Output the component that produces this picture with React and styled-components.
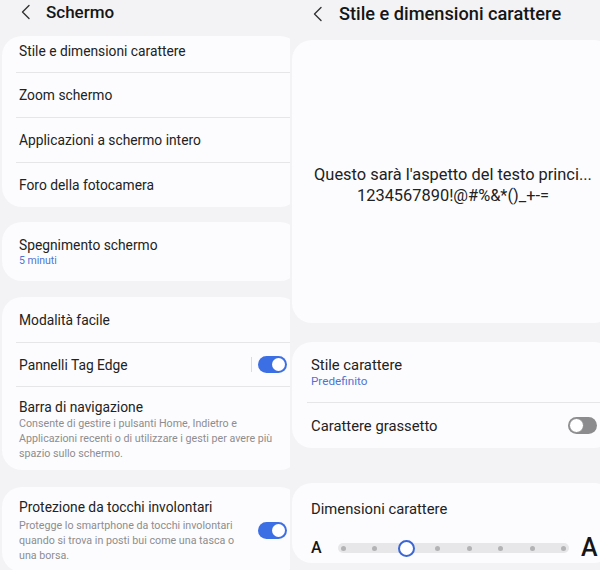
import React from 'react';
import styled, {createGlobalStyle} from 'styled-components';

const GlobalStyle = createGlobalStyle`
body{
margin:0;
background:#f3f3f5;
font-family:Roboto, "Noto Sans", sans-serif;
color:#1f1f1f;
}
`;

const Page = styled.div`
width:600px;
height:570px;
display:flex;
flex-direction:row;
overflow:hidden;
background:#f3f3f5;
`;

const Panel = styled.div`
width:${p => p.width}px;
flex-shrink:0;
height:100%;
overflow:hidden;
display:flex;
flex-direction:column;
`;

const Header = styled.div`
height:${p => p.height}px;
flex-shrink:0;
display:flex;
align-items:flex-start;
padding-left:${p => p.indent}px;
padding-top:${p => p.top}px;
box-sizing:border-box;
gap:${p => p.gap}px;
`;

const HeaderTitle = styled.div`
font-size:${p => p.size}px;
font-weight:500;
line-height:20px;
color:#161616;
`;

const Back = styled.svg`
width:10px;
height:16px;
margin-top:2px;
flex-shrink:0;
`;

const Card = styled.div`
width:${p => p.width}px;
margin-left:2px;
margin-top:${p => p.gap || 0}px;
flex-shrink:0;
background:#fcfcfe;
border-radius:20px;
box-sizing:border-box;
display:flex;
flex-direction:column;
`;

const Row = styled.div`
height:${p => p.height ? p.height + 'px' : 'auto'};
display:flex;
flex-direction:row;
align-items:center;
justify-content:space-between;
padding:${p => p.pad || '0'};
padding-left:${p => p.left}px;
padding-right:${p => p.right}px;
box-sizing:border-box;
`;

const Texts = styled.div`
display:flex;
flex-direction:column;
`;

const Title = styled.div`
font-size:${p => p.big ? 14.8 : 13.8}px;
line-height:18px;
color:#222;
`;

const Sub = styled.div`
font-size:${p => p.big ? 11.7 : 10.5}px;
line-height:14px;
color:#4f74d2;
`;

const Desc = styled.div`
font-size:10.7px;
line-height:15px;
color:#8d8d8f;
margin-top:${p => p.top || 0}px;
white-space:nowrap;
`;

const DescLine = styled.span`
display:block;
`;

const Divider = styled.div`
height:1px;
background:#e6e6e8;
margin-left:${p => p.inset}px;
flex-shrink:0;
`;

const Controls = styled.div`
display:flex;
align-items:center;
gap:6px;
`;

const VLine = styled.div`
width:1px;
height:15px;
background:#dcdcde;
`;

const Switch = styled.div`
width:29px;
height:17px;
border-radius:9px;
box-sizing:border-box;
background:${p => p.on ? '#3d6fe4' : '#8c8c8e'};
display:flex;
align-items:center;
justify-content:${p => p.on ? 'flex-end' : 'flex-start'};
padding:0 2px;
flex-shrink:0;
`;

const Knob = styled.div`
width:${p => p.on ? 13 : 15}px;
height:${p => p.on ? 13 : 15}px;
border-radius:50%;
background:#fff;
box-sizing:border-box;
margin-left:${p => p.on ? 0 : -1}px;
border:${p => p.on ? 'none' : '1px solid #8c8c8e'};
`;

const Preview = styled.div`
height:283px;
display:flex;
flex-direction:column;
align-items:center;
justify-content:center;
padding-top:6px;
box-sizing:border-box;
text-align:center;
`;

const PreviewLine = styled.div`
font-size:16.4px;
line-height:21px;
color:#222;
white-space:nowrap;
`;

const SizeRow = styled.div`
display:flex;
align-items:center;
height:30px;
margin-top:15px;
padding-left:19px;
`;

const Letter = styled.div`
font-size:${p => p.size}px;
font-weight:500;
color:#151515;
width:${p => p.w}px;
line-height:30px;
margin-left:${p => p.ml || 0}px;
`;

const Track = styled.div`
width:231px;
height:10px;
border-radius:5px;
background:#e7e7ea;
display:flex;
align-items:center;
justify-content:space-between;
padding:0 5.5px;
box-sizing:border-box;
`;

const Slot = styled.div`
width:0;
display:flex;
justify-content:center;
align-items:center;
`;

const Dot = styled.div`
width:5px;
height:5px;
border-radius:50%;
background:#b3b3b6;
flex-shrink:0;
`;

const Thumb = styled.div`
width:17px;
height:17px;
border-radius:50%;
background:#fff;
border:2px solid #3a66d6;
box-sizing:border-box;
flex-shrink:0;
`;

const BackIcon = () => (
    <Back viewBox="0 0 10 16">
        <polyline points="8,1.5 1.5,8 8,14.5" fill="none" stroke="#333" strokeWidth="1.4" strokeLinecap="round" strokeLinejoin="round"/>
    </Back>
);

const Toggle = ({on}) => (
    <Switch on={on ? 1 : 0}><Knob on={on ? 1 : 0}/></Switch>
);

const Description = ({lines, top}) => (
    <Desc top={top}>
        {lines.map((l, i) => <DescLine key={i}>{l}</DescLine>)}
    </Desc>
);

const steps = 8;
const level = 2;

const LeftPanel = () => (
    <Panel width={290}>
        <Header height={36} indent={21} top={2} gap={15}>
            <BackIcon/>
            <HeaderTitle size={17}>Schermo</HeaderTitle>
        </Header>
        <Card width={298}>
            <Row height={36} left={17} pad="0 0 6px 0"><Title>Stile e dimensioni carattere</Title></Row>
            <Divider inset={14}/>
            <Row height={44} left={17}><Title>Zoom schermo</Title></Row>
            <Divider inset={14}/>
            <Row height={44} left={17}><Title>Applicazioni a schermo intero</Title></Row>
            <Divider inset={14}/>
            <Row height={44} left={17}><Title>Foro della fotocamera</Title></Row>
        </Card>
        <Card width={298} gap={15}>
            <Row height={59} left={17}>
                <Texts>
                    <Title>Spegnimento schermo</Title>
                    <Sub>5 minuti</Sub>
                </Texts>
            </Row>
        </Card>
        <Card width={298} gap={16}>
            <Row height={45} left={17}><Title>Modalità facile</Title></Row>
            <Divider inset={14}/>
            <Row height={43} left={17} right={13}>
                <Title>Pannelli Tag Edge</Title>
                <Controls><VLine/><Toggle on/></Controls>
            </Row>
            <Divider inset={14}/>
            <Row left={17} pad="11px 0 9px 0">
                <Texts>
                    <Title>Barra di navigazione</Title>
                    <Description lines={[
                        'Consente di gestire i pulsanti Home, Indietro e',
                        'Applicazioni recenti o di utilizzare i gesti per avere più',
                        'spazio sullo schermo.'
                    ]}/>
                </Texts>
            </Row>
        </Card>
        <Card width={298} gap={17}>
            <Row left={17} right={13} pad="11px 0 9px 0">
                <Texts>
                    <Title>Protezione da tocchi involontari</Title>
                    <Description top={2} lines={[
                        'Protegge lo smartphone da tocchi involontari',
                        'quando si trova in posti bui come una tasca o',
                        'una borsa.'
                    ]}/>
                </Texts>
                <Toggle on/>
            </Row>
        </Card>
    </Panel>
);

const RightPanel = () => (
    <Panel width={310}>
        <Header height={40} indent={23} top={4} gap={16}>
            <BackIcon/>
            <HeaderTitle size={18.2}>Stile e dimensioni carattere</HeaderTitle>
        </Header>
        <Card width={322}>
            <Preview>
                <PreviewLine>Questo sarà l'aspetto del testo princi...</PreviewLine>
                <PreviewLine>1234567890!@#%&amp;*()_+-=</PreviewLine>
            </Preview>
        </Card>
        <Card width={322} gap={19}>
            <Row height={60} left={19} pad="0 0 1px 0">
                <Texts>
                    <Title big>Stile carattere</Title>
                    <Sub big>Predefinito</Sub>
                </Texts>
            </Row>
            <Divider inset={15}/>
            <Row height={45} left={19} right={17}>
                <Title big>Carattere grassetto</Title>
                <Toggle/>
            </Row>
        </Card>
        <Card width={322} gap={35}>
            <Row left={19} pad="17px 0 0 0"><Title big>Dimensioni carattere</Title></Row>
            <SizeRow>
                <Letter size={16} w={27}>A</Letter>
                <Track>
                    {Array.from({length: steps}).map((_, i) => (
                        <Slot key={i}>{i === level ? <Thumb/> : <Dot/>}</Slot>
                    ))}
                </Track>
                <Letter size={25} w={20} ml={12}>A</Letter>
            </SizeRow>
        </Card>
    </Panel>
);

export default function App() {
    return (
        <>
            <GlobalStyle/>
            <Page>
                <LeftPanel/>
                <RightPanel/>
            </Page>
        </>
    );
}
